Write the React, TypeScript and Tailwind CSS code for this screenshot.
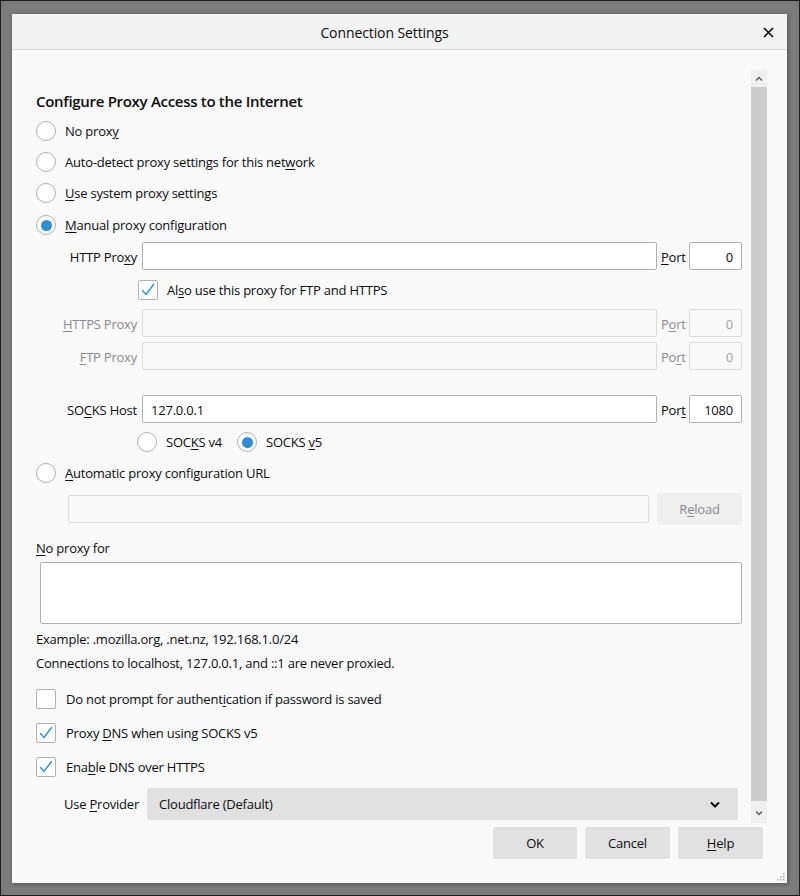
import React from "react";

const Radio = ({ checked = false }: { checked?: boolean }) => (
  <span className="flex h-5 w-5 shrink-0 items-center justify-center rounded-full border border-[#b1b1b3] bg-white">
    {checked && <span className="h-[11px] w-[11px] rounded-full bg-[#2a90d8]" />}
  </span>
);

const Checkbox = ({ checked = false }: { checked?: boolean }) => (
  <span className="flex h-5 w-5 shrink-0 items-center justify-center rounded-[2px] border border-[#b1b1b3] bg-white">
    {checked && (
      <svg width="14" height="14" viewBox="0 0 14 14" fill="none">
        <path d="M1.5 7.5 L5 11.5 L12.5 1.5" stroke="#3a94d8" strokeWidth="1.5" strokeLinecap="round" strokeLinejoin="round" />
      </svg>
    )}
  </span>
);

const U = ({ children }: { children: React.ReactNode }) => (
  <span className="underline decoration-1 underline-offset-2">{children}</span>
);

const ProxyRow = ({
  label,
  value = "",
  port,
  disabled = false,
  className = "",
}: {
  label: React.ReactNode;
  value?: string;
  port: React.ReactNode;
  disabled?: boolean;
  className?: string;
}) => (
  <div className={`flex h-[28px] items-center ${className}`}>
    <div className={`w-[101px] pt-[1px] text-right ${disabled ? "text-[#8a8a8f]" : ""}`}>{label}</div>
    <div
      className={`ml-[5px] flex h-[28px] w-[515px] items-center rounded-[2px] border pl-[8px] pt-[1px] ${
        disabled ? "border-[#dcdcdc] bg-[#f9f9f9]" : "border-[#b1b1b3] bg-white"
      }`}
    >
      {value}
    </div>
    <div className={`ml-[4px] w-[25px] pt-[1px] ${disabled ? "text-[#8a8a8f]" : ""}`}>{port}</div>
    <div
      className={`ml-[3px] flex h-[28px] w-[53px] items-center justify-end rounded-[2px] border pr-[8px] pt-[1px] ${
        disabled ? "border-[#dcdcdc] bg-[#f9f9f9] text-[#a3a3a8]" : "border-[#b1b1b3] bg-white"
      }`}
    >
      {disabled ? "0" : value === "127.0.0.1" ? "1080" : "0"}
    </div>
  </div>
);

export default function App() {
  return (
    <div className="box-border h-[896px] w-[800px] overflow-hidden border border-[#1e1e1e] bg-[#7b7b7b] pl-[11px] pt-[13px] font-['Open_Sans',sans-serif] text-[13px] leading-5 tracking-[-0.22px] text-[#0c0c0d]">
      <div className="relative flex h-[869px] w-[775px] flex-col bg-[#f9f9f9] shadow-[1px_1px_4px_rgba(0,0,0,0.35)]">
        {/* title bar */}
        <div className="flex h-[36px] shrink-0 items-center border-b border-[#d9d9d9] bg-[#f2f2f2] pt-[2px]">
          <div className="w-[10px]" />
          <div className="flex-1 text-center text-[14px] tracking-[-0.1px]">Connection Settings</div>
          <div className="flex w-[40px] justify-end pr-[13px]">
            <svg width="11" height="11" viewBox="0 0 11 11">
              <path d="M1 1 L10 10 M10 1 L1 10" stroke="#0c0c0d" strokeWidth="1.6" />
            </svg>
          </div>
        </div>

        {/* scrolling area */}
        <div className="mt-[20px] flex h-[753px] shrink-0">
          <div className="ml-[24px] flex w-[706px] flex-col">
            <div className="mt-[21px] h-5 text-[15px] font-semibold tracking-[-0.3px]">Configure Proxy Access to the Internet</div>

            <div className="mt-[10px] flex h-5 items-center gap-[9px]">
              <Radio />
              <span>
                No prox<U>y</U>
              </span>
            </div>
            <div className="mt-[11px] flex h-5 items-center gap-[9px]">
              <Radio />
              <span>
                Auto-detect proxy settings for this net<U>w</U>ork
              </span>
            </div>
            <div className="mt-[11px] flex h-5 items-center gap-[9px]">
              <Radio />
              <span>
                <U>U</U>se system proxy settings
              </span>
            </div>
            <div className="mt-[12px] flex h-5 items-center gap-[9px]">
              <Radio checked />
              <span>
                <U>M</U>anual proxy configuration
              </span>
            </div>

            <ProxyRow
              className="mt-[7px]"
              label={
                <>
                  HTTP Pro<U>x</U>y
                </>
              }
              port={<><U>P</U>ort</>}
            />

            <div className="ml-[102px] mt-[10px] flex h-5 items-center gap-[9px]">
              <Checkbox checked />
              <span>
                Al<U>s</U>o use this proxy for FTP and HTTPS
              </span>
            </div>

            <ProxyRow
              className="mt-[9px]"
              disabled
              label={<><U>H</U>TTPS Proxy</>}
              port={<>P<U>o</U>rt</>}
            />
            <ProxyRow
              className="mt-[5px]"
              disabled
              label={<><U>F</U>TP Proxy</>}
              port={<>Po<U>r</U>t</>}
            />
            <ProxyRow
              className="mt-[25px]"
              value="127.0.0.1"
              label={<>SO<U>C</U>KS Host</>}
              port={<>Por<U>t</U></>}
            />

            <div className="ml-[101px] mt-[9px] flex h-5 items-center">
              <div className="flex w-[100px] items-center gap-[9px]">
                <Radio />
                <span>
                  SOC<U>K</U>S v4
                </span>
              </div>
              <div className="flex items-center gap-[9px]">
                <Radio checked />
                <span>
                  SOCKS <U>v</U>5
                </span>
              </div>
            </div>

            <div className="mt-[11px] flex h-5 items-center gap-[9px]">
              <Radio />
              <span>
                <U>A</U>utomatic proxy configuration URL
              </span>
            </div>

            <div className="ml-[32px] mt-[10px] flex h-[32px] items-center">
              <div className="h-[28px] w-[581px] rounded-[2px] border border-[#dcdcdc] bg-[#f9f9f9]" />
              <div className="ml-[8px] flex h-[32px] w-[85px] items-center justify-center rounded-[2px] bg-[#efefef] text-[#8a8a8f]">
                <span>
                  R<U>e</U>load
                </span>
              </div>
            </div>

            <div className="mt-[13px] h-5">
              <U>N</U>o proxy for
            </div>
            <div className="ml-[4px] mt-[4px] h-[62px] w-[702px] rounded-[2px] border border-[#b1b1b3] bg-white" />

            <div className="mt-[5px] h-5">Example: .mozilla.org, .net.nz, 192.168.1.0/24</div>
            <div className="mt-[4px] h-5">Connections to localhost, 127.0.0.1, and ::1 are never proxied.</div>

            <div className="mt-[16px] flex h-5 items-center gap-[10px]">
              <Checkbox />
              <span>
                Do not prompt for authent<U>i</U>cation if password is saved
              </span>
            </div>
            <div className="mt-[14px] flex h-5 items-center gap-[10px]">
              <Checkbox checked />
              <span>
                Proxy <U>D</U>NS when using SOCKS v5
              </span>
            </div>
            <div className="mt-[14px] flex h-5 items-center gap-[10px]">
              <Checkbox checked />
              <span>
                Ena<U>b</U>le DNS over HTTPS
              </span>
            </div>

            <div className="ml-[28px] mt-[11px] flex h-[32px] items-center">
              <div className="w-[83px]">
                Use <U>P</U>rovider
              </div>
              <div className="flex h-[32px] w-[591px] items-center justify-between rounded-[2px] bg-[#e1e1e2] pl-[12px] pr-[18px]">
                <span>Cloudflare (Default)</span>
                <svg width="10" height="7" viewBox="0 0 10 7">
                  <path d="M1 1.5 L5 5.5 L9 1.5" stroke="#0c0c0d" strokeWidth="2" fill="none" />
                </svg>
              </div>
            </div>
          </div>

          {/* scrollbar */}
          <div className="ml-[9px] flex w-[16px] flex-col bg-[#f0f0f0]">
            <div className="flex h-[17px] items-center justify-center">
              <svg width="8" height="5" viewBox="0 0 8 5">
                <path d="M1 4.5 L4 1.5 L7 4.5" stroke="#606060" strokeWidth="1.5" fill="none" />
              </svg>
            </div>
            <div className="flex-1 bg-[#cdcdcd]" />
            <div className="flex h-[22px] items-end justify-center pb-[7px]">
              <svg width="8" height="5" viewBox="0 0 8 5">
                <path d="M1 0.5 L4 3.5 L7 0.5" stroke="#606060" strokeWidth="1.5" fill="none" />
              </svg>
            </div>
          </div>
        </div>

        {/* buttons */}
        <div className="mt-[4px] flex justify-end gap-[8px] pr-[24px]">
          <div className="flex h-[32px] w-[84px] items-center justify-center rounded-[2px] bg-[#e1e1e2]">OK</div>
          <div className="flex h-[32px] w-[85px] items-center justify-center rounded-[2px] bg-[#e1e1e2]">Cancel</div>
          <div className="flex h-[32px] w-[85px] items-center justify-center rounded-[2px] bg-[#e1e1e2]">
            <span>
              <U>H</U>elp
            </span>
          </div>
        </div>

        {/* resize grip */}
        <svg className="absolute bottom-[2px] right-[2px]" width="8" height="8" viewBox="0 0 8 8">
          <rect x="6" y="0" width="1.5" height="1.5" fill="#b0b0b0" />
          <rect x="3" y="3" width="1.5" height="1.5" fill="#b0b0b0" />
          <rect x="6" y="3" width="1.5" height="1.5" fill="#b0b0b0" />
          <rect x="0" y="6" width="1.5" height="1.5" fill="#b0b0b0" />
          <rect x="3" y="6" width="1.5" height="1.5" fill="#b0b0b0" />
          <rect x="6" y="6" width="1.5" height="1.5" fill="#b0b0b0" />
        </svg>
      </div>
    </div>
  );
}
